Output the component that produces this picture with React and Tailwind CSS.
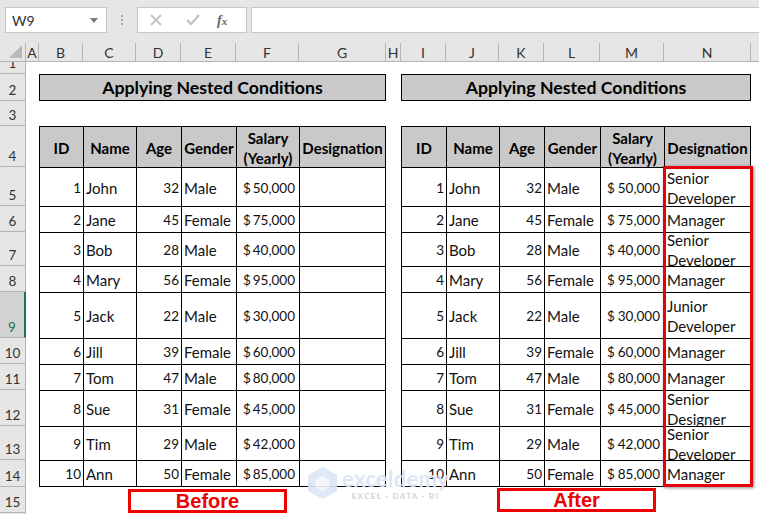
import React from "react";

const colNames = ["A","B","C","D","E","F","G","H","I","J","K","L","M","N"];
const people = [
  [1,"John",32,"Male","50,000","Senior Developer"],
  [2,"Jane",45,"Female","75,000","Manager"],
  [3,"Bob",28,"Male","40,000","Senior Developer"],
  [4,"Mary",56,"Female","95,000","Manager"],
  [5,"Jack",22,"Male","30,000","Junior Developer"],
  [6,"Jill",39,"Female","60,000","Manager"],
  [7,"Tom",47,"Male","80,000","Manager"],
  [8,"Sue",31,"Female","45,000","Senior Designer"],
  [9,"Tim",29,"Male","42,000","Senior Developer"],
  [10,"Ann",50,"Female","85,000","Manager"],
];
const heads = ["ID","Name","Age","Gender","Salary (Yearly)","Designation"];

function Head({ children, last }) {
  return (
    <div className={`flex items-center justify-center overflow-hidden border-t border-l border-black bg-[#c9c9c9] pt-px text-center text-[15px] leading-[20px] font-bold text-black ${last ? "border-r" : ""}`}>
      {children}
    </div>
  );
}

function Cell({ children, className = "px-[2px] text-[15px]", last, bottom }) {
  return (
    <div className={`flex items-center overflow-hidden border-t border-l border-black pt-px leading-[20px] ${last ? "border-r" : ""} ${bottom ? "border-b" : ""} ${className}`}>
      {children}
    </div>
  );
}

function Title() {
  return (
    <div className="col-span-6 flex items-center justify-center border border-black bg-[#c9c9c9] pt-px text-[17.7px] font-bold text-black">
      Applying Nested Conditions
    </div>
  );
}

function HeadRow() {
  return (
    <>
      {heads.map((h, i) => (
        <Head key={h} last={i === 5}>{h === "Salary (Yearly)" ? <span>Salary<br />(Yearly)</span> : h}</Head>
      ))}
    </>
  );
}

function DataRow({ p, done, bottom }) {
  return (
    <>
      <Cell className="justify-end px-[2px] text-[13.5px]" bottom={bottom}>{p[0]}</Cell>
      <Cell bottom={bottom}>{p[1]}</Cell>
      <Cell className="justify-end px-[2px] text-[13.5px]" bottom={bottom}>{p[2]}</Cell>
      <Cell bottom={bottom}>{p[3]}</Cell>
      <Cell className="justify-between pr-[4px] pl-[6px] text-[13.5px]" bottom={bottom}><span>$</span><span>{p[4]}</span></Cell>
      <Cell last bottom={bottom}>{done ? p[5] : ""}</Cell>
    </>
  );
}

function RowHead({ n, active }) {
  return (
    <div className={`flex items-end justify-center overflow-hidden border-b border-[#b5b5b5] pb-[1px] text-[13.5px] leading-[18px] ${active ? "border-r-2 border-r-[#217346] bg-[#d2d2d2] text-[#217346]" : "border-r border-r-[#b5b5b5] bg-[#e6e6e6] text-[#333]"}`}>
      {n}
    </div>
  );
}

export default function App() {
  return (
    <div className="relative h-[514px] w-[759px] overflow-hidden bg-white text-[#111] [font-family:Lato,'Liberation_Sans',sans-serif]">
      {/* Formula bar */}
      <div className="flex h-[43px] items-start bg-[#e6e6e6] pt-[7px] pl-[5px]">
        <div className="flex h-[26px] w-[102px] items-center justify-between border border-[#c6c6c6] bg-white pr-[8px] pl-[6px] text-[14px] text-[#333]">
          <span>W9</span>
          <svg width="8" height="5" viewBox="0 0 8 5"><path d="M0 0h8L4 5z" fill="#7a7a7a" /></svg>
        </div>
        <div className="flex h-[26px] w-[30px] flex-col items-center justify-center gap-[2px]">
          <i className="block h-[2px] w-[2px] bg-[#aaa]" />
          <i className="block h-[2px] w-[2px] bg-[#aaa]" />
          <i className="block h-[2px] w-[2px] bg-[#aaa]" />
        </div>
        <div className="flex h-[26px] w-[110px] items-center border border-[#c6c6c6] bg-white">
          <svg className="ml-[12px]" width="12" height="12" viewBox="0 0 12 12"><path d="M1 1l10 10M11 1L1 11" stroke="#c4c4c4" strokeWidth="2" fill="none" /></svg>
          <svg className="ml-[24px]" width="14" height="12" viewBox="0 0 14 12"><path d="M1 6l4 4 8-9" stroke="#c4c4c4" strokeWidth="2.4" fill="none" /></svg>
          <span className="ml-[17px] text-[14px] font-bold text-[#666] italic [font-family:'Liberation_Serif',serif]">f<span className="text-[11px]">x</span></span>
        </div>
        <div className="ml-[4px] h-[26px] flex-1 border-y border-l border-[#c6c6c6] bg-white" />
      </div>

      {/* Sheet */}
      <div className="grid grid-cols-[26px_13px_44px_53px_45px_55px_63px_87px_15px_45px_53px_45px_56px_64px_87px_8px] grid-rows-[19px_12px_27px_25px_41px_39px_26px_34px_26px_46px_26px_26px_36px_34px_27px_26px_1px]">
        {/* Column letters */}
        <div className="flex items-end justify-end border-r border-b border-[#b5b5b5] bg-[#e6e6e6] pr-[3px] pb-[3px]">
          <svg width="13" height="13" viewBox="0 0 13 13"><path d="M13 0v13H0z" fill="#b9b9b9" /></svg>
        </div>
        {colNames.map((c) => (
          <div key={c} className="flex items-center justify-center border-r border-b border-[#b5b5b5] bg-[#e6e6e6] text-[14px] text-[#333]">{c}</div>
        ))}
        <div className="border-b border-[#b5b5b5] bg-[#e6e6e6]" />

        {/* Row 1 */}
        <RowHead n={1} /><div className="col-span-15" />
        {/* Row 2 */}
        <RowHead n={2} /><div /><Title /><div /><Title /><div />
        {/* Row 3 */}
        <RowHead n={3} /><div className="col-span-15" />
        {/* Row 4 */}
        <RowHead n={4} /><div /><HeadRow /><div /><HeadRow /><div />
        {/* Rows 5 to 14 */}
        {people.map((p, i) => (
          <React.Fragment key={p[0]}>
            <RowHead n={i + 5} active={i === 4} />
            <div />
            <DataRow p={p} bottom={i === 9} />
            <div />
            <DataRow p={p} done bottom={i === 9} />
            <div />
          </React.Fragment>
        ))}
        {/* Row 15 */}
        <RowHead n={15} /><div className="col-span-15" />
        <div className="border-r border-[#b5b5b5] bg-[#e6e6e6]" />
      </div>

      {/* Watermark */}
      <div className="absolute top-[467px] left-[308px] flex items-start gap-[5px] opacity-90">
        <svg width="29" height="32" viewBox="0 0 29 32">
          <path d="M14.5 0L29 8v16l-14.5 8L0 24V8z" fill="#dbe6f7" />
          <path d="M14.5 9l7 4v7l-7 4-7-4v-7z" fill="#f2f6fc" />
        </svg>
        <div className="flex flex-col items-center">
          <span className="text-[22px] leading-[24px] font-bold tracking-[0.3px] text-[#dbe4f6]">exceldemy</span>
          <span className="text-[8px] leading-[10px] font-bold tracking-[1.4px] text-[#d0d0d0]">EXCEL · DATA · BI</span>
        </div>
      </div>

      {/* Red highlight over Designation */}
      <div className="absolute top-[166px] left-[663px] h-[321px] w-[90px] border-[3px] border-[#e8000b] shadow-[1px_1px_3px_rgba(0,0,0,0.45)]" />

      {/* Labels */}
      <div className="absolute top-[489px] left-[128px] flex h-[24px] w-[159px] items-center justify-center border-[3px] border-[#f00000] text-[20px] font-bold text-[#f00000] [font-family:'Liberation_Sans',sans-serif]">Before</div>
      <div className="absolute top-[488px] left-[497px] flex h-[24px] w-[159px] items-center justify-center border-[3px] border-[#f00000] text-[20px] font-bold text-[#f00000] [font-family:'Liberation_Sans',sans-serif]">After</div>
    </div>
  );
}
